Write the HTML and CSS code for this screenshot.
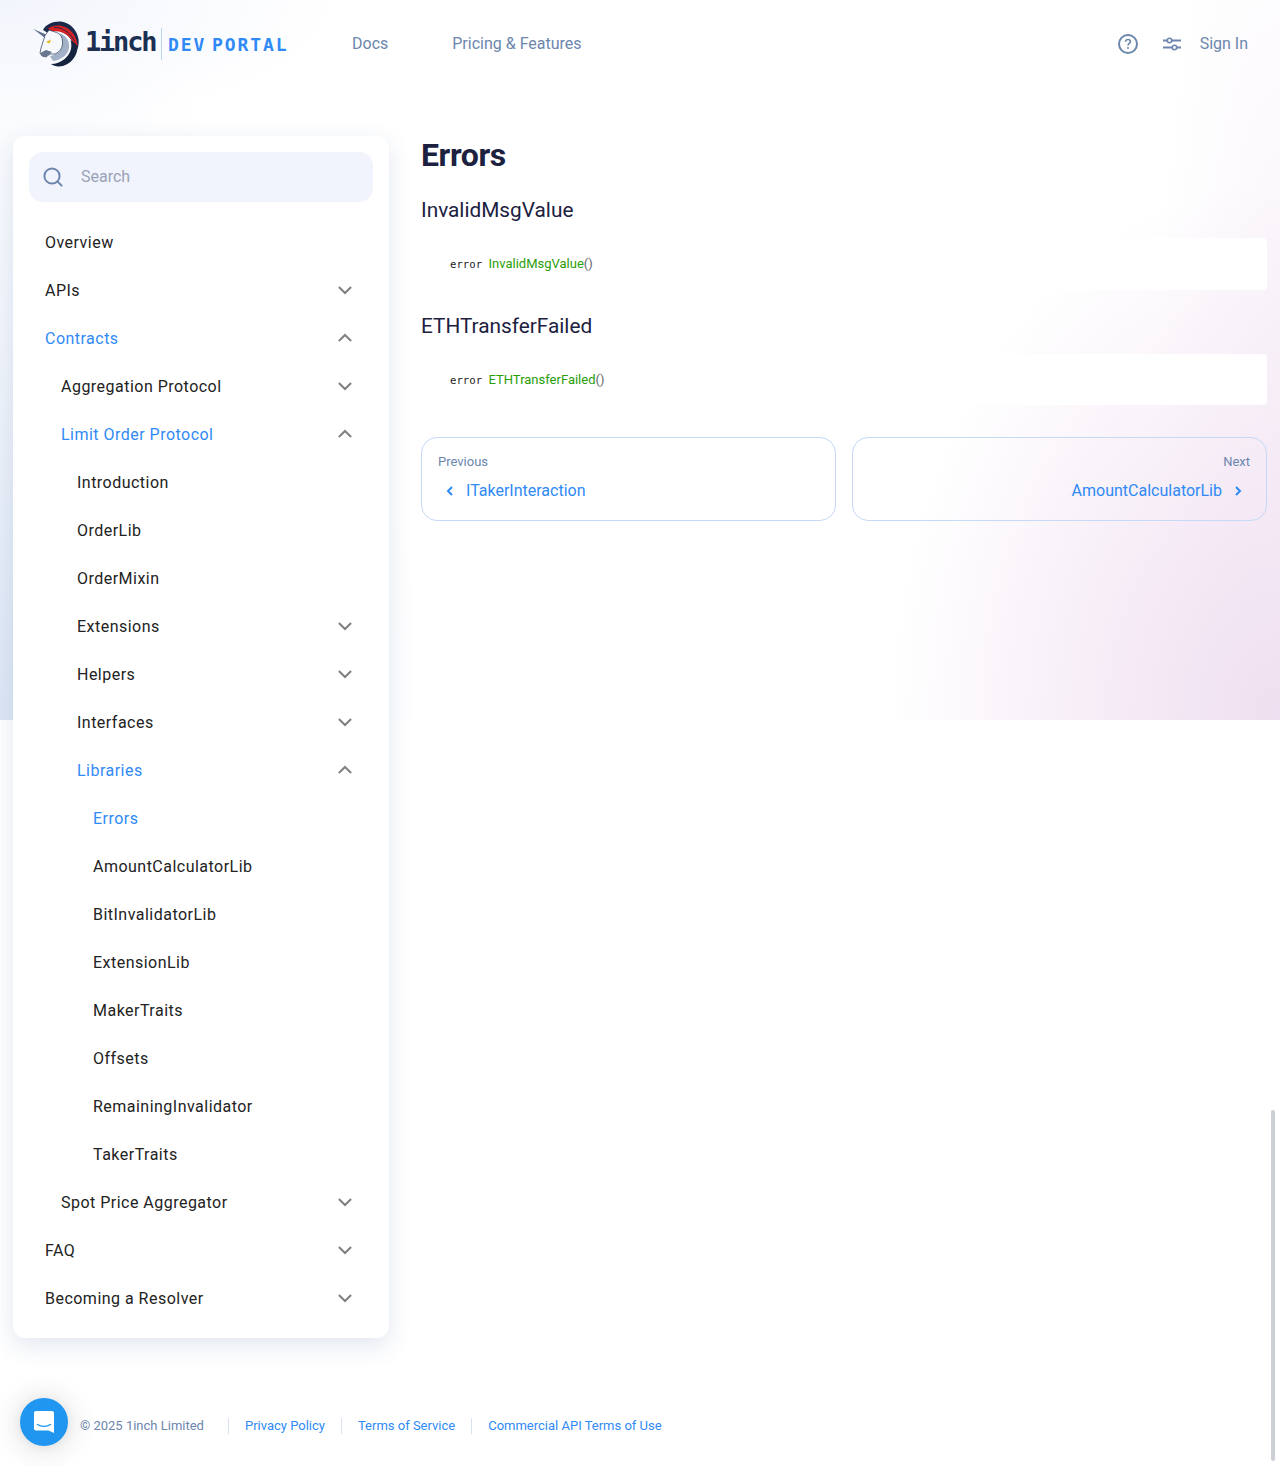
FILE: index.html
```html
<!DOCTYPE html>
<html lang="en">
<head>
<meta charset="utf-8">
<title>Errors | 1inch Dev Portal</title>
<link rel="stylesheet" href="styles.css">
</head>
<body>
<div class="backdrop"></div>
<div class="page">
  <header class="topbar">
    <a class="logo" href="#">
      <svg class="logo-mark" width="46" height="46" viewBox="0 0 46 46">
        <path d="M0.3 8 L13 13.5 L12 17 Z" fill="#5d6f8c"/>
        <path d="M10 9 C13 3 20 0 28 0.5 C37 1.5 44 9 45.5 18 C46 22 45.5 25 44.5 28 L40 22 C37 15 30 10 22 9 L15 12 Z" fill="#1b2a4a"/>
        <path d="M15 7.5 C20 4 27 3.5 32 6 C39 9 44 16 44.5 25 L41 24 C39 17 33 12 26 10.5 L18 10 Z" fill="#d82122"/>
        <path d="M21 6.5 C29 6 37 11 41.5 20" fill="none" stroke="#1b2a4a" stroke-width=".9"/>
        <path d="M26 12 C33 14 37 20 36 27 C35 34 28 39 20 40 L17 35 C24 34 29 29 29 23 C29 18 28 15 26 12 Z" fill="#a3b1c7"/>
        <path d="M12 14.5 L16 9 L22 11 C27 12 29.5 16 29.5 21 C30 26 27 31 22 33 L17 33 L13 36 L9 35 L7 32 L8 27 Z" fill="#f7f8fb" stroke="#27365a" stroke-width=".7"/>
        <path d="M44.5 25 C45 35 37 45 26 45.5 C23 45.6 20 44.5 18 43 C28 43 36 36 38 28 C38.5 25 38.5 22 37.5 19 L42 22 Z" fill="#16233f"/>
        <path d="M13 21 L18 18.5 L16.5 22.5 Z" fill="#e3b81f"/>
        <path d="M7.3 32 L13 29 L19 31 L13 36 L9 35 Z" fill="#67758e"/>
      </svg>
      <span class="logo-name">1inch</span>
      <span class="logo-rule"></span>
      <span class="logo-sub">DEV PORTAL</span>
    </a>
    <nav class="topnav">
      <a href="#">Docs</a>
      <a href="#">Pricing &amp; Features</a>
    </nav>
    <div class="toptools">
      <svg width="20" height="20" viewBox="0 0 20 20" fill="none" stroke="#6c86ad" stroke-width="2">
        <circle cx="10" cy="10" r="9"/>
        <path d="M7.6 7.7 C7.7 6.2 8.8 5.5 10 5.5 C11.4 5.5 12.4 6.4 12.4 7.6 C12.4 9.4 10 9.4 10 11.4" stroke-width="1.6"/>
        <circle cx="10" cy="14" r="1" fill="#6c86ad" stroke="none"/>
      </svg>
      <svg width="20" height="16" viewBox="0 0 20 16" fill="none" stroke="#6c86ad" stroke-width="2">
        <path d="M1 4.5 H5 M10 4.5 H19 M1 11.5 H10 M15 11.5 H19"/>
        <circle cx="7.5" cy="4.5" r="2.2" stroke-width="1.6"/>
        <circle cx="12.5" cy="11.5" r="2.2" stroke-width="1.6"/>
      </svg>
      <a class="signin" href="#">Sign In</a>
    </div>
  </header>

  <main class="layout">
    <aside class="sidebar">
      <div class="search">
        <svg width="20" height="20" viewBox="0 0 20 20" fill="none" stroke="#6c86ad" stroke-width="2">
          <circle cx="9" cy="9" r="7.6"/>
          <path d="M14.6 14.6 L18.6 18.6" stroke-linecap="round"/>
        </svg>
        <span class="search-text">Search</span>
      </div>
      <ul class="tree">
        <li><a class="row" href="#">Overview</a></li>
        <li><a class="row" href="#">APIs<svg class="chev" viewBox="0 0 24 24"><path d="M5.9 9 L12 15 L18.1 9"/></svg></a></li>
        <li><a class="row active" href="#">Contracts<svg class="chev" viewBox="0 0 24 24"><path d="M5.9 15 L12 9 L18.1 15"/></svg></a>
          <ul class="tree">
            <li><a class="row" href="#">Aggregation Protocol<svg class="chev" viewBox="0 0 24 24"><path d="M5.9 9 L12 15 L18.1 9"/></svg></a></li>
            <li><a class="row active" href="#">Limit Order Protocol<svg class="chev" viewBox="0 0 24 24"><path d="M5.9 15 L12 9 L18.1 15"/></svg></a>
              <ul class="tree">
                <li><a class="row" href="#">Introduction</a></li>
                <li><a class="row" href="#">OrderLib</a></li>
                <li><a class="row" href="#">OrderMixin</a></li>
                <li><a class="row" href="#">Extensions<svg class="chev" viewBox="0 0 24 24"><path d="M5.9 9 L12 15 L18.1 9"/></svg></a></li>
                <li><a class="row" href="#">Helpers<svg class="chev" viewBox="0 0 24 24"><path d="M5.9 9 L12 15 L18.1 9"/></svg></a></li>
                <li><a class="row" href="#">Interfaces<svg class="chev" viewBox="0 0 24 24"><path d="M5.9 9 L12 15 L18.1 9"/></svg></a></li>
                <li><a class="row active" href="#">Libraries<svg class="chev" viewBox="0 0 24 24"><path d="M5.9 15 L12 9 L18.1 15"/></svg></a>
                  <ul class="tree">
                    <li><a class="row active" href="#">Errors</a></li>
                    <li><a class="row" href="#">AmountCalculatorLib</a></li>
                    <li><a class="row" href="#">BitInvalidatorLib</a></li>
                    <li><a class="row" href="#">ExtensionLib</a></li>
                    <li><a class="row" href="#">MakerTraits</a></li>
                    <li><a class="row" href="#">Offsets</a></li>
                    <li><a class="row" href="#">RemainingInvalidator</a></li>
                    <li><a class="row" href="#">TakerTraits</a></li>
                  </ul>
                </li>
              </ul>
            </li>
            <li><a class="row" href="#">Spot Price Aggregator<svg class="chev" viewBox="0 0 24 24"><path d="M5.9 9 L12 15 L18.1 9"/></svg></a></li>
          </ul>
        </li>
        <li><a class="row" href="#">FAQ<svg class="chev" viewBox="0 0 24 24"><path d="M5.9 9 L12 15 L18.1 9"/></svg></a></li>
        <li><a class="row" href="#">Becoming a Resolver<svg class="chev" viewBox="0 0 24 24"><path d="M5.9 9 L12 15 L18.1 9"/></svg></a></li>
      </ul>
    </aside>

    <article class="content">
      <h1>Errors</h1>
      <h2>InvalidMsgValue</h2>
      <pre class="code"><code class="code-line"><span class="kw">error </span><span class="fn">InvalidMsgValue</span><span class="pn">()</span></code></pre>
      <h2>ETHTransferFailed</h2>
      <pre class="code"><code class="code-line"><span class="kw">error </span><span class="fn">ETHTransferFailed</span><span class="pn">()</span></code></pre>
      <div class="pager">
        <a class="pager-card" href="#">
          <span class="pager-label">Previous</span>
          <span class="pager-link">
            <svg class="pager-icon" viewBox="0 0 24 24"><path d="M14 8 L10 12 L14 16"/></svg>
            ITakerInteraction
          </span>
        </a>
        <a class="pager-card next" href="#">
          <span class="pager-label">Next</span>
          <span class="pager-link">
            AmountCalculatorLib
            <svg class="pager-icon" viewBox="0 0 24 24"><path d="M10 8 L14 12 L10 16"/></svg>
          </span>
        </a>
      </div>
    </article>
  </main>

  <footer class="footer">
    <span class="copy">© 2025 1inch Limited</span>
    <a href="#">Privacy Policy</a>
    <a href="#">Terms of Service</a>
    <a href="#">Commercial API Terms of Use</a>
  </footer>
</div>

<button class="chat" aria-label="Open chat">
  <svg width="22" height="24" viewBox="0 0 22 24">
    <path d="M3 1 H19 C20.2 1 21 1.8 21 3 V23 L15.5 20.5 H3 C1.8 20.5 1 19.7 1 18.5 V3 C1 1.8 1.8 1 3 1 Z" fill="#fff"/>
    <path d="M4.5 14.5 C8 17 14 17 17.5 14.5" fill="none" stroke="#2196f0" stroke-width="1.4" stroke-linecap="round"/>
  </svg>
</button>
<div class="scroll-thumb"></div>
</body>
</html>
```

FILE: styles.css
```css
* { box-sizing: border-box; }
html, body { margin: 0; padding: 0; }
body {
  position: relative;
  height: 1466px;
  overflow: hidden;
  background: #fff;
  font-family: Roboto, "Liberation Sans", sans-serif;
  color: #222;
}
a { text-decoration: none; color: inherit; }
ul { list-style: none; margin: 0; padding: 0; }

.backdrop {
  position: absolute;
  left: 0; top: 0; right: 0;
  height: 720px;
  background:
    radial-gradient(ellipse 390px 540px at 100% 100%, #efdff0 0%, rgba(242,228,243,.7) 45%, rgba(246,238,247,0) 100%),
    radial-gradient(ellipse 120px 500px at 100% 45%, rgba(247,240,248,.6) 0%, rgba(247,240,248,0) 100%),
    radial-gradient(ellipse 420px 700px at 0% 100%, #dce6f4 0%, rgba(228,235,247,.55) 50%, rgba(236,242,250,0) 100%),
    radial-gradient(ellipse 340px 130px at 0% 0%, #f2f5fc 0%, rgba(245,248,253,0) 100%);
}
.page { position: relative; }

.topbar {
  display: flex;
  align-items: center;
  height: 88px;
  padding: 0 32px 0 33px;
  color: #6c86ad;
}
.logo { display: flex; align-items: center; width: 319px; }
.logo-mark { flex: none; }
.logo-name {
  margin-left: 6px;
  font: 700 27px/1 "DejaVu Sans Mono", monospace;
  letter-spacing: -2.2px;
  color: #1b2f52;
  width: 70px;
  margin-top: -6px;
}
.logo-rule { width: 1px; height: 32px; background: #bcd3f2; margin: 0 6px 0 6px; }
.logo-sub {
  font: 700 18px/1 "DejaVu Sans Mono", monospace;
  letter-spacing: 1.9px;
  word-spacing: -7px;
  color: #2f8af5;
  margin-top: 2px;
  white-space: nowrap;
}
.topnav { display: flex; gap: 64px; font-size: 16px; padding-bottom: 2px; }
.toptools { margin-left: auto; display: flex; align-items: center; gap: 24px; }
.signin { margin-left: -6px; font-size: 16px; padding-bottom: 2px; }

.layout {
  display: flex;
  gap: 32px;
  align-items: flex-start;
  padding: 48px 13px 0;
}
.sidebar {
  flex: none;
  width: 376px;
  padding: 16px;
  background: #fff;
  border-radius: 12px;
  box-shadow: 0 8px 24px rgba(33, 70, 130, .13);
}
.search {
  display: flex;
  align-items: center;
  gap: 18px;
  height: 50px;
  padding: 0 14px;
  margin-bottom: 16px;
  background: #f1f4fd;
  border-radius: 14px;
  font-size: 16px;
  color: #9aa3b5;
}
.search-text { padding-bottom: 2px; }
.tree .tree { padding-left: 16px; }
.row {
  display: flex;
  align-items: center;
  justify-content: space-between;
  height: 48px;
  padding: 0 16px;
  font-size: 16px;
  letter-spacing: .48px;
  color: #222;
}
.row.active { color: #2f8af5; }
.chev {
  width: 24px; height: 24px; flex: none;
  fill: none; stroke: #808080; stroke-width: 2;
}

.content { flex: 1; min-width: 0; }
h1 {
  margin: 0 0 22px;
  font-size: 32px;
  line-height: 38px;
  font-weight: 700;
  letter-spacing: -.4px;
  color: #1c2140;
}
h2 {
  margin: 0 0 14px;
  font-size: 20.8px;
  line-height: 28px;
  font-weight: 400;
  color: #1c2140;
}
.code {
  margin: 0 0 22px;
  padding: 16px 29px;
  background: #fff;
  border-radius: 4px;
  height: 51.5px;
  font-size: 13px;
  line-height: 19.5px;
}
.code-line { font-family: Roboto, sans-serif; }
.kw { font-family: "DejaVu Sans Mono", monospace; font-size: 10.67px; line-height: 1; color: #1a1a1a; }
.fn { color: #2a9d0a; }
.pn { color: #666; }

.pager { display: flex; gap: 16px; margin-top: 32px; }
.pager-card {
  flex: 1;
  display: flex;
  flex-direction: column;
  gap: 9px;
  height: 84px;
  padding: 16px;
  border: 1px solid #c6d9f6;
  border-radius: 16px;
}
.pager-card.next { align-items: flex-end; }
.pager-label { font-size: 13px; line-height: 16px; color: #6c86ad; }
.pager-link {
  display: flex;
  align-items: center;
  gap: 4px;
  font-size: 16px;
  line-height: 24px;
  color: #2f8af5;
}
.pager-icon { width: 24px; height: 24px; fill: none; stroke: #2f8af5; stroke-width: 2; }

.footer {
  display: flex;
  align-items: center;
  height: 16px;
  margin-top: 80px;
  padding-left: 80px;
  font-size: 13px;
  line-height: 16px;
  color: #2f8af5;
}
.copy { color: #6c86ad; margin-right: 24px; }
.footer a { padding: 0 16px; border-left: 1px solid #d8e2f0; }

.chat {
  position: absolute;
  left: 20px; top: 1398px;
  width: 48px; height: 48px;
  display: flex; align-items: center; justify-content: center;
  padding: 0;
  border: 0;
  border-radius: 50%;
  background: #2196f0;
  box-shadow: 0 1px 10px rgba(0,0,0,.06), 0 2px 32px rgba(0,0,0,.16);
}
.scroll-thumb {
  position: absolute;
  left: 1271px; top: 1110px;
  width: 4px; height: 351px;
  border-radius: 2px;
  background: #cdcfd6;
}
```
